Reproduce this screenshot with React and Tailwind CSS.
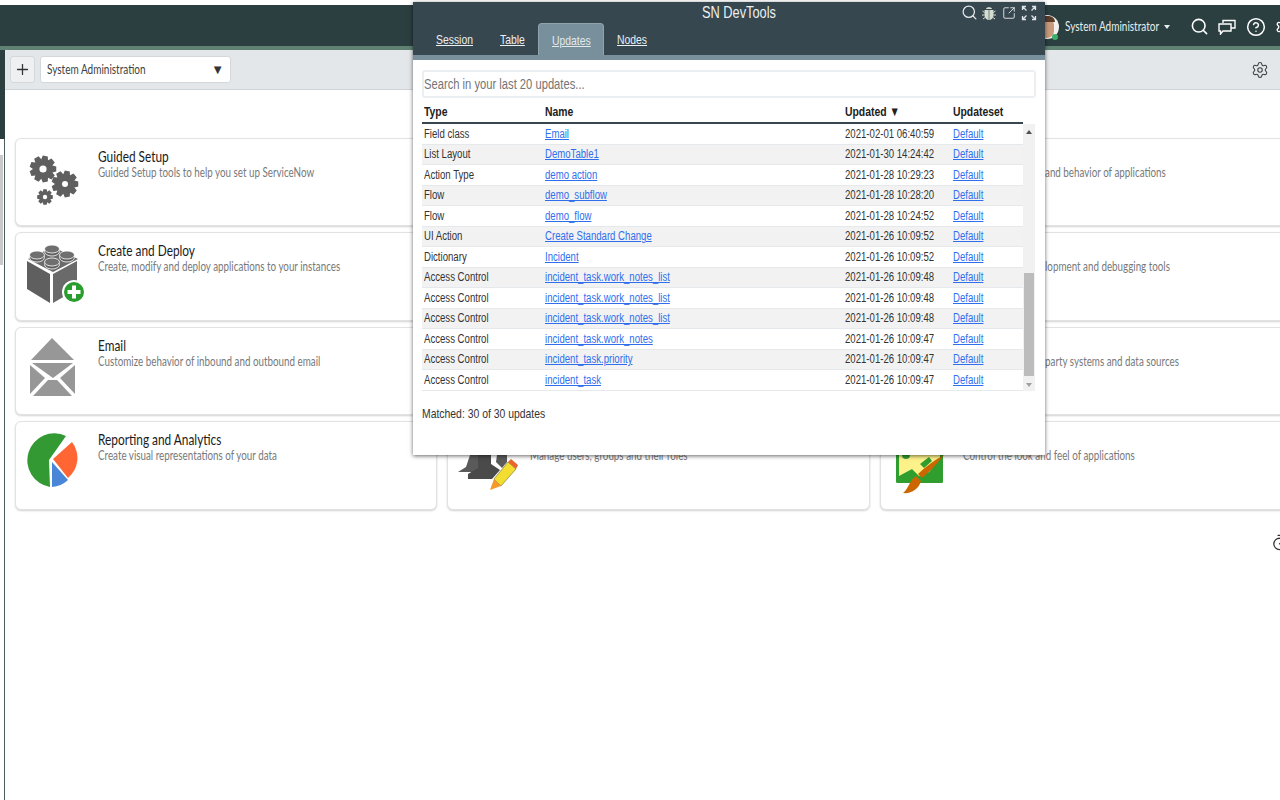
import React from 'react';
import { Search, Plus, SquareArrowOutUpRight, CircleHelp, Settings, Timer } from 'lucide-react';

const UPDATES = [
  ['Field class', 'Email', '2021-02-01 06:40:59'],
  ['List Layout', 'DemoTable1', '2021-01-30 14:24:42'],
  ['Action Type', 'demo action', '2021-01-28 10:29:23'],
  ['Flow', 'demo_subflow', '2021-01-28 10:28:20'],
  ['Flow', 'demo_flow', '2021-01-28 10:24:52'],
  ['UI Action', 'Create Standard Change', '2021-01-26 10:09:52'],
  ['Dictionary', 'Incident', '2021-01-26 10:09:52'],
  ['Access Control', 'incident_task.work_notes_list', '2021-01-26 10:09:48'],
  ['Access Control', 'incident_task.work_notes_list', '2021-01-26 10:09:48'],
  ['Access Control', 'incident_task.work_notes_list', '2021-01-26 10:09:48'],
  ['Access Control', 'incident_task.work_notes', '2021-01-26 10:09:47'],
  ['Access Control', 'incident_task.priority', '2021-01-26 10:09:47'],
  ['Access Control', 'incident_task', '2021-01-26 10:09:47'],
];

// the screenshot is squeezed sideways, so text is narrowed the same way
function Narrow({ children, className = 'scale-x-[0.8]' }) {
  return <span className={`inline-block origin-left whitespace-nowrap ${className}`}>{children}</span>;
}

// cog outline with square-ish teeth
function gearPath(cx, cy, outer, inner, teeth) {
  const pts = [];
  const step = (Math.PI * 2) / teeth;
  for (let i = 0; i < teeth; i++) {
    const a = i * step;
    [[-0.5, inner], [-0.27, outer], [0.27, outer], [0.5, inner]].forEach(([k, r]) => {
      const t = a + k * step;
      pts.push(`${(cx + Math.cos(t) * r).toFixed(2)} ${(cy + Math.sin(t) * r).toFixed(2)}`);
    });
  }
  return `M${pts.join('L')}Z`;
}

function GearsIcon() {
  return (
    <svg width="60" height="60" viewBox="0 0 60 60">
      <path d={gearPath(17, 20, 13.5, 10, 9)} fill="#5f5f5f" />
      <circle cx="17" cy="20" r="3.6" fill="#fff" />
      <path d={gearPath(39, 35, 13.5, 10, 9)} fill="#5f5f5f" />
      <circle cx="39" cy="35" r="3" fill="#fff" />
      <path d={gearPath(19, 48, 8, 5.8, 8)} fill="#5f5f5f" />
      <circle cx="19" cy="48" r="2.2" fill="#fff" />
    </svg>
  );
}

function BlockIcon() {
  return (
    <svg width="60" height="62" viewBox="0 0 60 62">
      <path d="M2 16L27 4L52 16L27 29Z" fill="#6a6a6a" />
      <path d="M1 18L24 31V60L1 46Z" fill="#5f5f5f" />
      <path d="M27 31L51 18V46L27 60Z" fill="#6a6a6a" />
      {[[26, 6], [11, 12], [41, 12], [26, 19]].map(([x, y]) => (
        <g key={`${x}-${y}`}>
          <ellipse cx={x} cy={y + 2.5} rx="7.5" ry="4.5" fill="#5f5f5f" stroke="#fff" strokeWidth="0.8" />
          <ellipse cx={x} cy={y} rx="7.5" ry="4" fill="#6f6f6f" stroke="#fff" strokeWidth="0.8" />
        </g>
      ))}
      <circle cx="48" cy="49" r="12" fill="#fff" />
      <circle cx="48" cy="49" r="10" fill="#2a9d2f" />
      <path d="M46 42.5h4v4.5h4.500v4H50v4.500h-4V51h-4.500v-4H46Z" fill="#fff" />
    </svg>
  );
}

function MailIcon() {
  return (
    <svg width="60" height="62" viewBox="0 0 60 62">
      <path d="M26 0L48 22H5Z" fill="#979797" />
      <path d="M6 25H47L27 40Z" fill="#979797" />
      <path d="M4 27L19 40L4 56Z" fill="#979797" />
      <path d="M49 27V56L34 40Z" fill="#979797" />
      <path d="M7 58L22 42H31L46 58Z" fill="#979797" />
    </svg>
  );
}

function PieIcon() {
  return (
    <svg width="60" height="60" viewBox="0 0 60 60">
      <path d="M23 28L40 4A27 27 0 1 0 24 55Z" fill="#339933" />
      <path d="M27 27L46 10A26 26 0 0 1 42 46Z" fill="#ff6633" />
      <path d="M26 30L42 48A26 26 0 0 1 26 55Z" fill="#4a86d8" />
    </svg>
  );
}

function UsersIcon() {
  return (
    <svg width="60" height="60" viewBox="0 0 60 60">
      <path d="M0 40L8 35L12 23H22V40Z" fill="#5a5a5a" />
      <path d="M39 23H49V30L44 36L38 30Z" fill="#5a5a5a" />
      <path d="M20 23H33V32L42 38L34 47H10V42L20 36Z" fill="#4a4a4a" />
      <path d="M36 47L50 30L58 37L43 54Z" fill="#f2dd30" stroke="#6b6b30" strokeWidth="0.6" />
      <path d="M50 30L53 27L60 33L58 37Z" fill="#e8662c" />
      <path d="M36 47L43 54L32 58Z" fill="#f49a2a" />
    </svg>
  );
}

function ThemeIcon() {
  return (
    <svg width="60" height="64" viewBox="0 0 60 64">
      <rect x="5" y="6" width="47" height="45" rx="1.500" fill="#2f9e2f" />
      <path d="M8 10H49V26L38 40L28 44L21 37L8 44Z" fill="#fdf28a" />
      <circle cx="15" cy="23" r="4" fill="#2f9e2f" />
      <path d="M29 32L38 25L41 29L33 36Z" fill="#2f9e2f" />
      <path d="M53 23C46 32 38 40 31 46L27 42C34 35 44 28 53 23Z" fill="#cc6600" />
      <path d="M25 44L30 49C28 57 20 62 12 61C17 58 18 49 25 44Z" fill="#cc6600" />
    </svg>
  );
}

// cards in the middle column sit behind the popup, and the right column only shows the tail of its text
const CARDS = [
  { id: 1, title: 'Guided Setup', desc: 'Guided Setup tools to help you set up ServiceNow', icon: <GearsIcon /> },
  { id: 2 },
  { id: 3, desc: 'and behavior of applications', tail: true },
  { id: 4, title: 'Create and Deploy', desc: 'Create, modify and deploy applications to your instances', icon: <BlockIcon /> },
  { id: 5 },
  { id: 6, desc: 'lopment and debugging tools', tail: true },
  { id: 7, title: 'Email', desc: 'Customize behavior of inbound and outbound email', icon: <MailIcon /> },
  { id: 8 },
  { id: 9, desc: 'party systems and data sources', tail: true },
  { id: 10, title: 'Reporting and Analytics', desc: 'Create visual representations of your data', icon: <PieIcon /> },
  { id: 11, desc: 'Manage users, groups and their roles', icon: <UsersIcon /> },
  { id: 12, desc: 'Control the look and feel of applications', icon: <ThemeIcon /> },
];

function Card({ title, desc, icon, tail }) {
  return (
    <div className="h-[88.5px] bg-white rounded-md border border-[#e2e2e2] shadow-[0_1px_2px_rgba(0,0,0,0.18)] flex">
      <div className="w-[82px] shrink-0 pl-[10px] pt-[10px]">{icon}</div>
      <div className={tail ? 'pt-[9px] pl-[82px]' : 'pt-[9px]'}>
        <div className="h-[17px] text-[15px] leading-[17px] text-[#1b1b1b]">
          {title && <Narrow className="scale-x-[0.79]">{title}</Narrow>}
        </div>
        <div className="text-[13px] leading-[14px] text-[#77797b]">
          {desc && <Narrow className="scale-x-[0.755]">{desc}</Narrow>}
        </div>
      </div>
    </div>
  );
}

function DevToolsPopup() {
  return (
    <div className="absolute left-[413px] top-[2px] w-[632px] h-[453px] bg-white shadow-[0_1px_4px_rgba(0,0,0,0.6)] font-['Liberation_Sans',Arial,sans-serif]">
      <div className="relative h-[53px] bg-[#37474f] text-[#eceff1]">
        <div className="pl-[289px] pt-[1px] text-[16px] leading-[20px]">
          <Narrow>SN DevTools</Narrow>
        </div>
        <div className="absolute right-[8px] top-[2px] flex items-center gap-[3px]">
          <Search className="w-[17px] h-[17px] text-[#e4e8ea]" strokeWidth={1.8} />
          <svg width="16" height="16" viewBox="0 0 16 16" fill="#d5dcd2">
            <path d="M5 4C5 1.500 11 1.500 11 4Z" />
            <path d="M3.500 5H12.500V10C12.500 13.500 10 15 8 15C6 15 3.500 13.500 3.500 10Z" />
            <path d="M1.500 6L3.500 7.500M14.500 6L12.500 7.500M1 10H3.500M15 10H12.500M2 14L4 12.500M14 14L12 12.500" stroke="#d5dcd2" strokeWidth="1" />
            <path d="M8 5V15" stroke="#8fa39a" strokeWidth="1.500" />
          </svg>
          <SquareArrowOutUpRight className="w-[14px] h-[14px] ml-[2px] text-[#dfe4e6]" strokeWidth={1.6} />
          <svg width="16" height="16" viewBox="0 0 16 16" fill="none" stroke="#dfe4e6" strokeWidth="1.300" className="ml-[2px]">
            <path d="M1.500 5V1.500H5M1.500 1.500L5.500 5.500M11 1.500H14.500V5M14.500 1.500L10.500 5.500M1.500 11V14.500H5M1.500 14.500L5.500 10.500M14.500 11V14.500H11M14.500 14.500L10.500 10.500" />
          </svg>
        </div>
        <div className="absolute left-[23px] bottom-0 flex text-[13px] h-[32px] items-stretch">
          <div className="w-[64px] pt-[2px] flex items-center text-[#eceff1]"><Narrow className="scale-x-[0.8] underline">Session</Narrow></div>
          <div className="w-[38px] pt-[2px] flex items-center text-[#eceff1]"><Narrow className="scale-x-[0.8] underline">Table</Narrow></div>
          <div className="w-[66px] pt-[2px] pl-[13px] flex items-center text-[#e3e8ea] bg-[#78909c] rounded-t-[4px] border border-b-0 border-[#90a4ae]"><Narrow className="scale-x-[0.8] underline">Updates</Narrow></div>
          <div className="ml-[13px] pt-[2px] flex items-center text-[#eceff1]"><Narrow className="scale-x-[0.8] underline">Nodes</Narrow></div>
        </div>
      </div>
      <div className="h-[5px] bg-[#78909c]" />

      <div className="px-[9px] pt-[10px]">
        <div className="h-[28px] w-[614px] border-2 border-[#eceff1] rounded-[3px] flex items-center text-[14px] text-[#757575]">
          <Narrow>Search in your last 20 updates...</Narrow>
        </div>

        <div className="flex h-[25px] w-[601px] pt-[3px] items-center border-b-2 border-[#37474f] text-[13px] font-bold text-[#212121] mt-[1px]">
          <span className="w-[123px] pl-[2px]"><Narrow>Type</Narrow></span>
          <span className="w-[300px]"><Narrow>Name</Narrow></span>
          <span className="w-[108px]"><Narrow>Updated ▼</Narrow></span>
          <span><Narrow>Updateset</Narrow></span>
        </div>

        <div className="flex w-[613px]">
          <div className="w-[601px]">
            {UPDATES.map(([type, name, updated], i) => (
              <div
                key={i}
                className={`flex h-[20.5px] items-center border-b border-[#e6e9eb] text-[12px] text-[#333] ${i % 2 === 1 ? 'bg-[#f2f2f2]' : 'bg-white'}`}
              >
                <span className="w-[123px] pl-[2px]"><Narrow>{type}</Narrow></span>
                <span className="w-[300px]"><Narrow className="scale-x-[0.8] text-[#2f6fed] underline">{name}</Narrow></span>
                <span className="w-[108px]"><Narrow>{updated}</Narrow></span>
                <Narrow className="scale-x-[0.8] text-[#2f6fed] underline">Default</Narrow>
              </div>
            ))}
          </div>
          <div className="relative w-[12px] bg-[#f1f1f1]">
            <div className="absolute top-[6px] left-[3px] w-0 h-0 border-x-[3.500px] border-x-transparent border-b-[4px] border-b-[#505050]" />
            <div className="absolute top-[149px] left-[1px] w-[10px] h-[103px] bg-[#bcbcbc]" />
            <div className="absolute bottom-[4px] left-[3px] w-0 h-0 border-x-[3.500px] border-x-transparent border-t-[4px] border-t-[#a0a0a0]" />
          </div>
        </div>

        <div className="mt-[15px] text-[13px] leading-[16px] text-[#333]"><Narrow>Matched: 30 of 30 updates</Narrow></div>
      </div>
    </div>
  );
}

export default function App() {
  return (
    <div className="relative w-[1280px] h-[800px] overflow-hidden bg-white font-['Lato','Noto_Sans',sans-serif]">
      {/* top bar */}
      <div className="h-[5px] bg-white" />
      <div className="h-[45px] bg-[#2b3e40] border-b-[4px] border-[#5f8272] flex items-center justify-end pt-[2px] text-white">
        <div className="relative w-[24px] h-[24px] mr-[6px]">
          <div className="w-full h-full rounded-full bg-[#f3f1ee] overflow-hidden relative">
            <div className="absolute left-[5px] top-[3px] w-[14px] h-[20px] rounded-full bg-[#c99a7c]" />
            <div className="absolute left-[4px] top-[1px] w-[16px] h-[6px] rounded-t-full bg-[#5a3c2a]" />
          </div>
          <div className="absolute right-[1px] bottom-[-1px] w-[6px] h-[6px] rounded-full bg-[#3fae6a]" />
        </div>
        <span className="text-[13px] text-[#e8eeee] w-[93px]">
          <Narrow className="scale-x-[0.77]">System Administrator</Narrow>
        </span>
        <span className="ml-[6px] w-0 h-0 border-x-[3.500px] border-x-transparent border-t-[4px] border-t-[#e8eeee]" />
        <Search className="w-[19px] h-[19px] ml-[20px]" strokeWidth={2} />
        <svg width="18" height="16" viewBox="0 0 18 16" fill="none" stroke="#fff" strokeWidth="1.400" className="ml-[9px]">
          <path d="M5 4V1.500H17V9H13" />
          <path d="M1 5H13V12H5L2.500 15V12H1Z" />
        </svg>
        <CircleHelp className="w-[20px] h-[20px] ml-[10px]" strokeWidth={1.8} />
        <Settings className="w-[18px] h-[18px] ml-[9px] mr-[-13px] shrink-0" strokeWidth={1.8} />
      </div>

      <div className="flex h-[750px]">
        {/* left rail */}
        <div className="w-[5px] shrink-0 flex flex-col">
          <div className="h-[89px] bg-[#2b3e40]" />
          <div className="flex-1 border-r border-[#4b5d5f] bg-white pt-[16px]">
            <div className="w-[3px] h-[110px] bg-[#c9c9c9]" />
          </div>
        </div>

        <div className="flex-1 min-w-0">
          {/* toolbar */}
          <div className="h-[40px] bg-[#e4e7ea] border-b border-[#d0d3d6] flex items-center pl-[5px] pr-[11px]">
            <button className="w-[25px] h-[27px] bg-[#eef0f2] border border-[#d5d8db] rounded-[3px] flex items-center justify-center">
              <Plus className="w-[17px] h-[17px] text-[#333]" strokeWidth={1.8} />
            </button>
            <div className="ml-[5px] w-[191px] h-[27px] bg-white border border-[#d5d8db] rounded-[3px] flex items-center pl-[6px] pr-[6px]">
              <span className="text-[13px] text-[#3b3f42] flex-1 pt-[1px]"><Narrow className="scale-x-[0.77]">System Administration</Narrow></span>
              <span className="text-[13px] text-[#333]">▼</span>
            </div>
            <Settings className="w-[18px] h-[18px] ml-auto text-[#3b3f42]" strokeWidth={1.4} />
          </div>

          {/* app grid */}
          <div className="mt-[47.7px] ml-[10px] w-[1288px] grid grid-cols-[422px_423px_423px] gap-x-[10px] gap-y-[6px]">
            {CARDS.map((c) => (
              <Card key={c.id} {...c} />
            ))}
          </div>

          <div className="mt-[24px] flex justify-end mr-[-8px]">
            <Timer className="w-[17px] h-[17px] text-[#333]" strokeWidth={1.8} />
          </div>
        </div>
      </div>

      <DevToolsPopup />
    </div>
  );
}
